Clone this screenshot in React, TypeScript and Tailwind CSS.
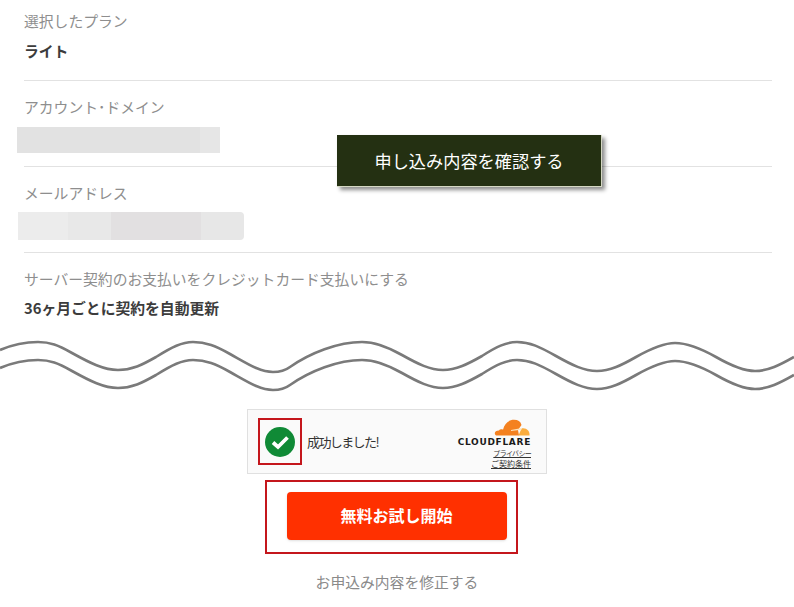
const font = { fontFamily: '"Noto Sans CJK JP", sans-serif' }

const wavePath =
  "M0 349 C14 343 26 341 38 341 C50 341 58 344 72 352 C90 362 104 369 118 369 C132 369 142 364 156 356 C172 346 182 341 193 341 C206 341 216 345 230 353 C248 363 260 371 273 371 C282 371 286 369 290 366 C310 352 338 341 362 341 C376 341 388 346 402 354 C418 363 430 369 443 369 C456 369 468 363 482 355 C496 346 506 341 517 341 C530 341 540 346 556 355 C572 364 584 370 597 370 C610 370 622 364 636 356 C652 347 664 342 675 342 C688 342 700 347 716 356 C730 364 744 370 755 370 C768 370 780 364 794 356"

const Cloud = () => (
  <svg width="36" height="17" viewBox="0 0 36 20" preserveAspectRatio="none" className="block">
    <path
      d="M2 19.5 C-0.5 17 1 13.5 5 13.5 C6 12 8 12 9 12.5 C10.5 5 15 1 20 1 C24 1 26.5 3 27.5 7 L24 13 L25 19.5 Z"
      fill="#f48120"
    />
    <path
      d="M24.5 19.5 C26 15 27 13 28 11 C32 10 36 13.5 35.5 19.5 Z"
      fill="#faad3f"
    />
    <path d="M17 13 L28 10.5 L27 12.5 L17 14 Z" fill="#fde3bd" />
  </svg>
)

const App = () => {
  return (
    <div className="relative w-[794px] h-[607px] overflow-hidden bg-white" style={font}>
      <div className="pl-6 pr-[22px]">
        <div className="h-[81px] border-b border-[#e2e2e2]">
          <div className="pt-[11px] text-[14.8px] leading-[20px] text-[#8e8e8e]">選択したプラン</div>
          <div className="pt-[10px] text-[14.8px] leading-[20px] font-bold text-[#3c3c3c]">ライト</div>
        </div>
        <div className="h-[86px] border-b border-[#e2e2e2]">
          <div className="pt-[16px] text-[14.8px] leading-[20px] text-[#8e8e8e]">アカウント･ドメイン</div>
          <div className="mt-[10px] -ml-[7px] w-[203px] h-[26px] bg-[#e6e6e6]">
            <div className="w-[183px] h-[26px] bg-[#e2e2e2]" />
          </div>
        </div>
        <div className="h-[86px] border-b border-[#e2e2e2]">
          <div className="pt-[16px] text-[14.8px] leading-[20px] text-[#8e8e8e]">メールアドレス</div>
          <div className="mt-[9px] -ml-[6px] w-[226px] h-[28px] flex rounded-sm bg-[#e7e7e7]">
            <div className="w-[50px] bg-[#ececec]" />
            <div className="w-[43px] bg-[#e8e8e8]" />
            <div className="w-[90px] bg-[#e2e0e1]" />
          </div>
        </div>
        <div className="pt-[16px] text-[14.8px] leading-[20px] text-[#8e8e8e]">サーバー契約のお支払いをクレジットカード支払いにする</div>
        <div className="pt-[9px] text-[14.8px] leading-[20px] font-bold text-[#3c3c3c]">36ヶ月ごとに契約を自動更新</div>
      </div>

      <svg width="794" height="60" viewBox="0 335 794 60" className="block mt-[18px]" fill="none" stroke="#7a7a7a" strokeWidth="2.6">
        <path d={wavePath} />
        <path d={wavePath} transform="translate(0 18)" />
      </svg>

      <div className="flex flex-col items-center pt-[13px]">
        <div className="w-[300px] h-[65px] flex items-center justify-between border border-[#e0e0e0] bg-[#fafafa] pl-[10px] pr-[15px]">
          <div className="flex items-center">
            <div className="w-[44px] h-[47px] flex items-center justify-center border-2 border-[#c4161c]">
              <svg width="30" height="30" viewBox="0 0 30 30" className="-ml-[1px]">
                <circle cx="15" cy="15" r="15" fill="#108a36" />
                <path d="M8 15.5 L13 20 L22.5 10.5" fill="none" stroke="#ffffff" strokeWidth="3.8" />
              </svg>
            </div>
            <span className="ml-[5px] text-[13px] tracking-[-1.6px] text-[#333333]">成功しました!</span>
          </div>
          <div className="flex flex-col items-end pt-[3px]">
            <div className="mr-[1px]">
              <Cloud />
            </div>
            <div className="mt-[1px] text-[9px] leading-[11px] font-bold tracking-[0.7px] text-[#1a1a1a]" style={{ fontFamily: '"DejaVu Sans", sans-serif' }}>CLOUDFLARE</div>
            <div className="mt-[1px] text-[7px] leading-[9px] tracking-[-0.7px] underline text-[#333333]">プライバシー</div>
            <div className="mt-[1px] text-[8px] leading-[9px] underline text-[#333333]">ご契約条件</div>
          </div>
        </div>

        <div className="mt-[6px] mr-[12px] w-[253px] h-[74px] pl-[20px] pb-[2px] flex items-center border-2 border-[#c4161c]">
          <div className="w-[220px] h-[48px] pb-[2px] flex items-center justify-center rounded bg-[#ff3000] text-[16px] font-bold text-white shadow-sm">
            無料お試し開始
          </div>
        </div>

        <div className="mt-[18px] text-[14.8px] leading-[20px] text-[#8a8a8a]">お申込み内容を修正する</div>
      </div>

      <div className="absolute left-[337px] top-[135px] w-[265px] h-[52px] flex items-center justify-center bg-[#243012] border-r border-b border-[#d5d8c4] text-[17.2px] text-white shadow-[3px_3px_4px_rgba(0,0,0,0.45)]">
        申し込み内容を確認する
      </div>
    </div>
  )
}

export default App
